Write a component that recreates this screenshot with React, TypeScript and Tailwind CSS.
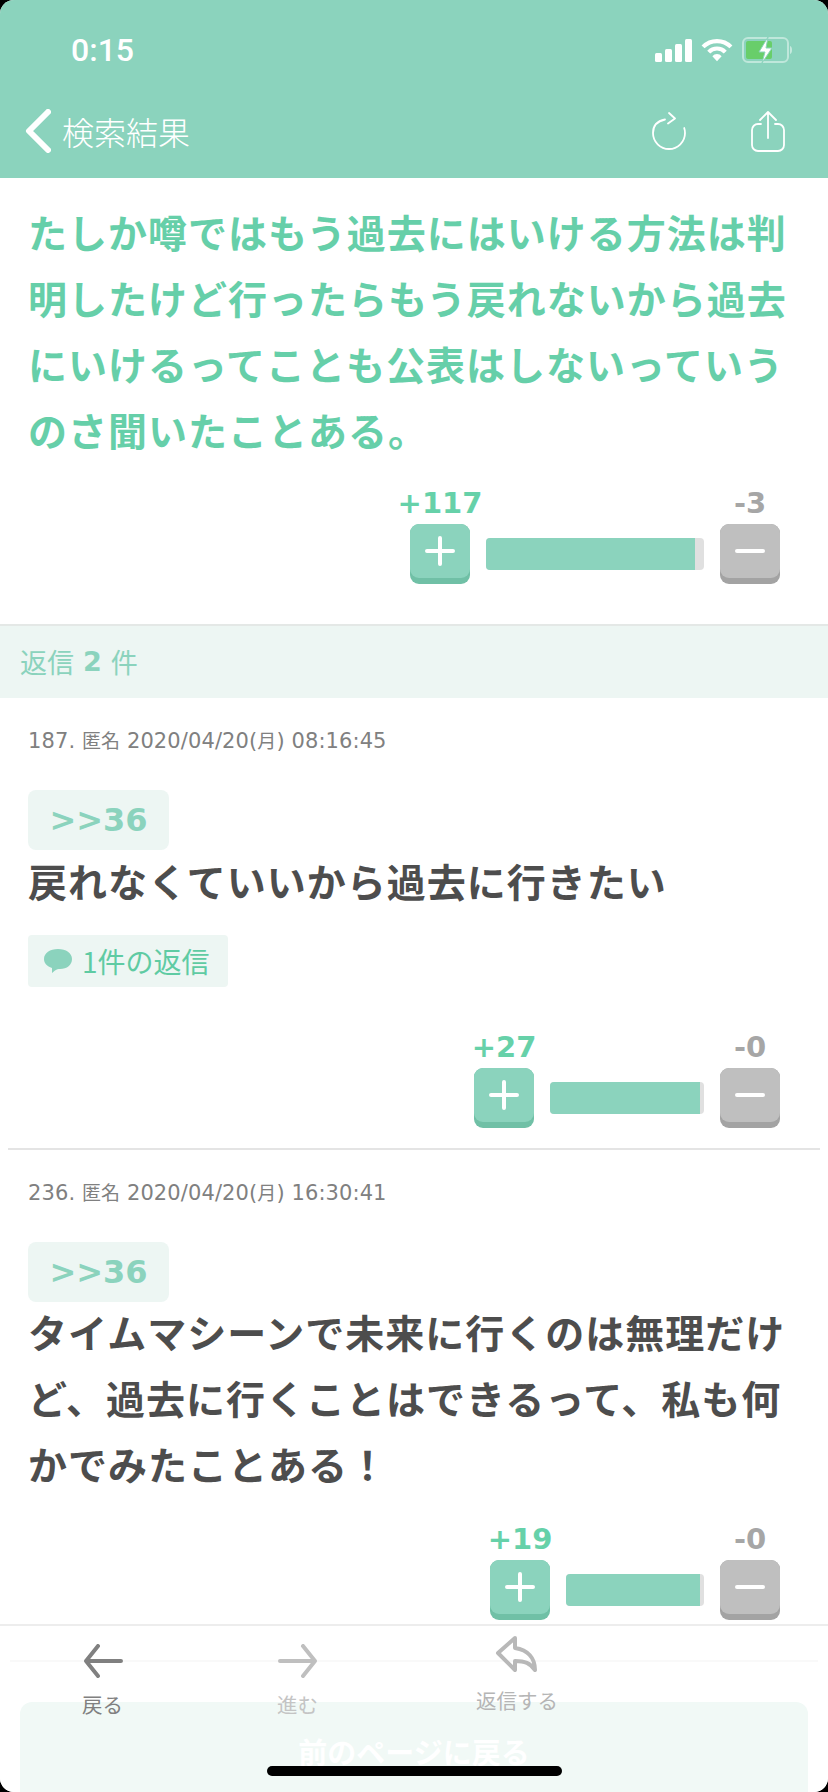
import React from 'react';

const CJK = "font-['Noto_Sans_CJK_JP',sans-serif]";
const LATIN = "font-['DejaVu_Sans','Noto_Sans_CJK_JP',sans-serif]";

const VoteRow = ({ plus, minus, barWidth, fill }: { plus: string; minus: string; barWidth: number; fill: number }) => {
  return (
    <div className="flex justify-end pr-[48px]">
      <div className="flex flex-col items-center w-[60px]">
        <div className={`h-[36px] leading-[30px] whitespace-nowrap text-[29px] font-bold text-[#66d1a9] ${LATIN}`}>{plus}</div>
        <div className="relative w-[60px] h-[60px] rounded-[9px] bg-[#70c0a6]">
          <div className="flex items-center justify-center h-[54px] rounded-[9px] bg-[#8bd3bd]">
            <svg width="30" height="30" viewBox="0 0 30 30">
              <path d="M15 2v26M2 15h26" stroke="#fff" strokeWidth="4" strokeLinecap="round" />
            </svg>
          </div>
        </div>
      </div>
      <div className="ml-[16px] mr-[16px] mt-[50px] h-[32px] rounded-[4px] bg-[#e0e0e0] overflow-hidden" style={{ width: barWidth }}>
        <div className="h-full bg-[#8bd3bd]" style={{ width: fill }} />
      </div>
      <div className="flex flex-col items-center w-[60px]">
        <div className={`h-[36px] leading-[30px] whitespace-nowrap text-[29px] font-bold text-[#a6a6a6] ${LATIN}`}>{minus}</div>
        <div className="w-[60px] h-[60px] rounded-[9px] bg-[#a3a3a3]">
          <div className="flex items-center justify-center h-[54px] rounded-[9px] bg-[#bfbfbf]">
            <svg width="30" height="30" viewBox="0 0 30 30">
              <path d="M2 15h26" stroke="#fff" strokeWidth="4" strokeLinecap="round" />
            </svg>
          </div>
        </div>
      </div>
    </div>
  );
};

const Chip = () => (
  <div className={`flex items-center justify-center w-[141px] h-[60px] rounded-[8px] bg-[#edf6f3] text-[32px] font-bold text-[#8bd3bd] ${LATIN}`}>
    &gt;&gt;36
  </div>
);

const Meta = ({ no, date, time }: { no: string; date: string; time: string }) => (
  <div className={`text-[21px] leading-[24px] tracking-[0.1px] text-[#808080] ${LATIN}`}>
    {no}. <span className="text-[19px]">匿名</span> {date}(<span className="text-[19px]">月</span>) {time}
  </div>
);

export default function App() {
  return (
    <div className="w-[828px] h-[1792px] bg-black">
      <div className="relative w-full h-full overflow-hidden rounded-[14px] bg-white">
        {/* Header */}
        <div className="h-[178px] bg-[#8bd3bd] text-white">
          <div className="flex items-center justify-between h-[100px] pl-[71px] pr-[36px]">
            <span className="text-[32px] font-medium font-['Roboto',sans-serif]">0:15</span>
            <div className="flex items-center gap-[9px]">
              <svg width="37" height="23" viewBox="0 0 37 23" fill="#fff">
                <rect x="0" y="14" width="7" height="9" rx="1.5" />
                <rect x="10" y="10" width="7" height="13" rx="1.5" />
                <rect x="20" y="5" width="7" height="18" rx="1.5" />
                <rect x="30" y="0" width="7" height="23" rx="1.5" />
              </svg>
              <svg width="32" height="24" viewBox="0 0 31 23" fill="none" stroke="#fff" strokeWidth="4">
                <path d="M2 8.5a19 19 0 0 1 27 0" />
                <path d="M7.5 13.5a11 11 0 0 1 16 0" />
                <path d="M15.5 22.5l-4.5-5a6 6 0 0 1 9 0z" fill="#fff" stroke="none" />
              </svg>
              <svg width="50" height="26" viewBox="0 0 50 26">
                <rect x="1" y="1" width="45" height="24" rx="5" fill="none" stroke="#fff" strokeOpacity="0.45" strokeWidth="2" />
                <rect x="4" y="4" width="26" height="18" rx="2" fill="#68ce6a" />
                <path d="M48 9c1.5.5 2 2 2 4s-.5 3.500-2 4z" fill="#fff" fillOpacity="0.5" />
                <path d="M26 0l-9 15h6l-3 11 10-15h-6z" fill="#fff" stroke="#8bd3bd" strokeWidth="1" />
              </svg>
            </div>
          </div>
          <div className="flex items-center h-[62px] pl-[25px] pr-[43px]">
            <svg width="26" height="44" viewBox="0 0 26 44" fill="none">
              <path d="M23 3L4 22l19 19" stroke="#fff" strokeWidth="6" strokeLinecap="round" strokeLinejoin="round" />
            </svg>
            <span className={`ml-[11px] text-[32px] font-light ${CJK}`}>検索結果</span>
            <div className="ml-auto flex items-center gap-[64px]">
              <svg width="36" height="38" viewBox="0 0 36 38" fill="none" stroke="#fff" strokeWidth="1.800" strokeLinecap="round" strokeLinejoin="round">
                <path d="M14 7.500C6.500 9 2 14 2 21a16 16 0 0 0 32 0c0-2-.3-3.500-.8-5" />
                <path d="M18 1l6 5.500-7 5" />
              </svg>
              <svg width="34" height="42" viewBox="0 0 34 42" fill="none" stroke="#fff" strokeWidth="1.800" strokeLinecap="round" strokeLinejoin="round">
                <path d="M10 14H7a6 6 0 0 0-6 6v15a6 6 0 0 0 6 6h20a6 6 0 0 0 6-6V20a6 6 0 0 0-6-6h-3" />
                <path d="M17 28V2M9 10l8-8 8 8" />
              </svg>
            </div>
          </div>
        </div>

        {/* Post */}
        <div className="pt-[20px]">
          <p className={`pl-[28px] pr-[26px] text-[39px] leading-[66px] tracking-[1px] font-bold text-[#66cfa9] ${CJK}`}>
            たしか噂ではもう過去にはいける方法は判明したけど行ったらもう戻れないから過去にいけるってことも公表はしないっていうのさ聞いたことある。
          </p>
          <div className="mt-[26px]">
            <VoteRow plus="+117" minus="-3" barWidth={218} fill={209} />
          </div>
        </div>

        {/* Replies header */}
        <div className={`mt-[40px] h-[74px] flex items-center pl-[20px] border-t-2 border-[#e4e8e6] bg-[#edf6f3] text-[27px] text-[#8bd3bd] ${CJK}`}>
          返信<span className="mx-[9px] font-bold font-['DejaVu_Sans',sans-serif]">2</span>件
        </div>

        {/* Reply 187 */}
        <div className="pt-[31px] px-[28px]">
          <Meta no="187" date="2020/04/20" time="08:16:45" />
          <div className="mt-[37px]"><Chip /></div>
          <p className={`-mt-[3px] text-[39px] leading-[66px] tracking-[1px] font-bold text-[#4d4d4d] ${CJK}`}>
            戻れなくていいから過去に行きたい
          </p>
          <div className="mt-[22px] flex items-center w-[200px] h-[52px] pl-[16px] rounded-[4px] bg-[#edf6f3]">
            <svg width="28" height="25" viewBox="0 0 28 25">
              <path d="M14 0c8 0 14 4 14 10s-5 10-12 10c-2 0-3 .3-5 1.500L8 24v-5C3 17.500 0 14 0 10 0 4 6 0 14 0z" fill="#8bd3bd" />
            </svg>
            <span className={`ml-[10px] text-[28px] text-[#5fcba3] ${CJK}`}>1件の返信</span>
          </div>
        </div>
        <div className="mt-[45px]">
          <VoteRow plus="+27" minus="-0" barWidth={154} fill={150} />
        </div>
        <div className="mx-[8px] mt-[20px] h-[2px] bg-[#e4e4e4]" />

        {/* Reply 236 */}
        <div className="pt-[31px] px-[28px]">
          <Meta no="236" date="2020/04/20" time="16:30:41" />
          <div className="mt-[37px]"><Chip /></div>
          <p className={`-mt-[4px] text-[39px] leading-[66px] tracking-[1px] font-bold text-[#4d4d4d] ${CJK}`}>
            タイムマシーンで未来に行くのは無理だけど、過去に行くことはできるって、私も何かでみたことある！
          </p>
        </div>
        <div className="mt-[28px]">
          <VoteRow plus="+19" minus="-0" barWidth={138} fill={134} />
        </div>

        {/* Bottom toolbar, sits over the page */}
        <div className="absolute left-0 right-0 top-[1624px] bottom-0 border-t-2 border-[#ededed] bg-white">
          <div className="absolute left-[10px] right-[10px] top-[34px] h-[2px] bg-[#f9f9f9]" />
          <div className={`absolute left-[20px] right-[20px] top-[76px] bottom-0 flex justify-center pt-[28px] rounded-t-[12px] bg-[#f1f9f6] text-[29px] font-bold text-white ${CJK}`}>
            前のページに戻る
          </div>
          <div className={`absolute inset-x-0 top-0 text-[20.5px] ${CJK}`}>
            <div className="absolute left-[82px] top-[18px] flex flex-col items-center text-[#808080]">
              <svg width="40" height="34" viewBox="0 0 40 34" fill="none" stroke="#808080" strokeWidth="4" strokeLinecap="round" strokeLinejoin="round">
                <path d="M38 17H3M15 2L3 17l12 15" />
              </svg>
              <span className="mt-[11px] leading-[30px]">戻る</span>
            </div>
            <div className="absolute left-[277px] top-[18px] flex flex-col items-center text-[#c4c4c4]">
              <svg width="40" height="34" viewBox="0 0 40 34" fill="none" stroke="#bfbfbf" strokeWidth="4" strokeLinecap="round" strokeLinejoin="round">
                <path d="M2 17h35M25 2l12 15-12 15" />
              </svg>
              <span className="mt-[11px] leading-[30px]">進む</span>
            </div>
            <div className="absolute left-[476px] top-[10px] flex flex-col items-center text-[#b5b5b5]">
              <svg width="44" height="38" viewBox="0 0 44 38" fill="none" stroke="#b8b8b8" strokeWidth="4" strokeLinecap="round" strokeLinejoin="round">
                <path d="M20 2L3 17l17 17V25c10 0 15 2 20 9 0-12-7-20-20-22z" />
              </svg>
              <span className="mt-[11px] leading-[30px]">返信する</span>
            </div>
          </div>
          <div className="absolute left-[267px] top-[140px] w-[295px] h-[10px] rounded-full bg-black" />
        </div>
      </div>
    </div>
  );
}
